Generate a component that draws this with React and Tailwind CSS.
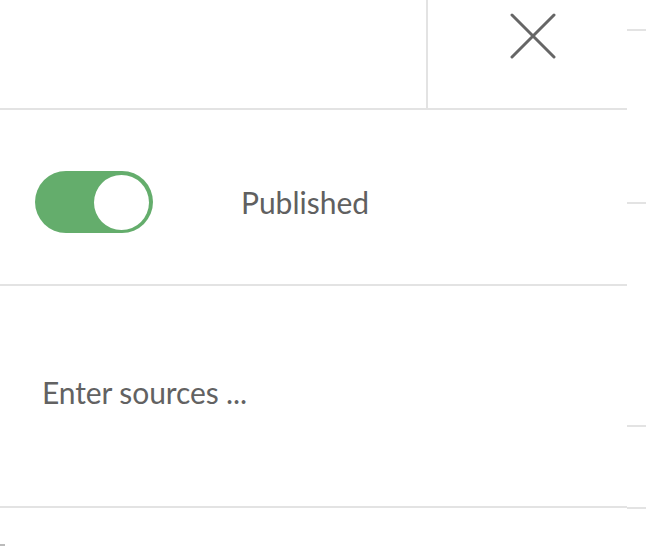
export default function App() {
  return (
    <div
      className="flex w-[646px] h-[546px] bg-white overflow-hidden"
      style={{ fontFamily: 'Lato, "Open Sans", sans-serif' }}
    >
      {/* main panel */}
      <div className="w-[627px] flex flex-col">
        {/* header row */}
        <div className="flex h-[110px] border-b-2 border-[#e3e3e3]">
          <div className="w-[428px] border-r-2 border-[#e3e3e3]" />
          <div className="flex-1 flex items-start justify-center pt-[13px] pl-[11px]">
            <svg width="46" height="46" viewBox="0 0 46 46" className="text-[#666]">
              <path d="M2 2L44 44M44 2L2 44" stroke="currentColor" strokeWidth="3" strokeLinecap="round" fill="none" />
            </svg>
          </div>
        </div>

        {/* status row */}
        <div className="flex items-center h-[176px] pt-[10px] pl-[35px] border-b-2 border-[#e3e3e3]">
          <button className="w-[118px] h-[62px] rounded-full bg-[#64ad6c] flex items-center justify-end pr-[4px]">
            <span className="block w-[55px] h-[55px] rounded-full bg-white" />
          </button>
          <span className="ml-[88px] text-[30px] text-[#606060]">Published</span>
        </div>

        {/* sources row */}
        <div className="flex items-center h-[222px] pl-[42px] pb-[8px] border-b-2 border-[#e3e3e3]">
          <span className="text-[30px] tracking-[-0.1px] text-[#626262]">Enter sources ...</span>
        </div>
        <div className="flex-1 flex items-end">
          <div className="w-[5px] h-[2px] bg-[#bbb]" />
        </div>
      </div>

      {/* right strip */}
      <div className="flex-1 flex flex-col">
        <div className="h-[2px] bg-[#e3e3e3] mt-[29px]" />
        <div className="h-[2px] bg-[#e3e3e3] mt-[171px]" />
        <div className="h-[2px] bg-[#e3e3e3] mt-[221px]" />
        <div className="h-[2px] bg-[#e3e3e3] mt-[80px]" />
      </div>
    </div>
  );
}
